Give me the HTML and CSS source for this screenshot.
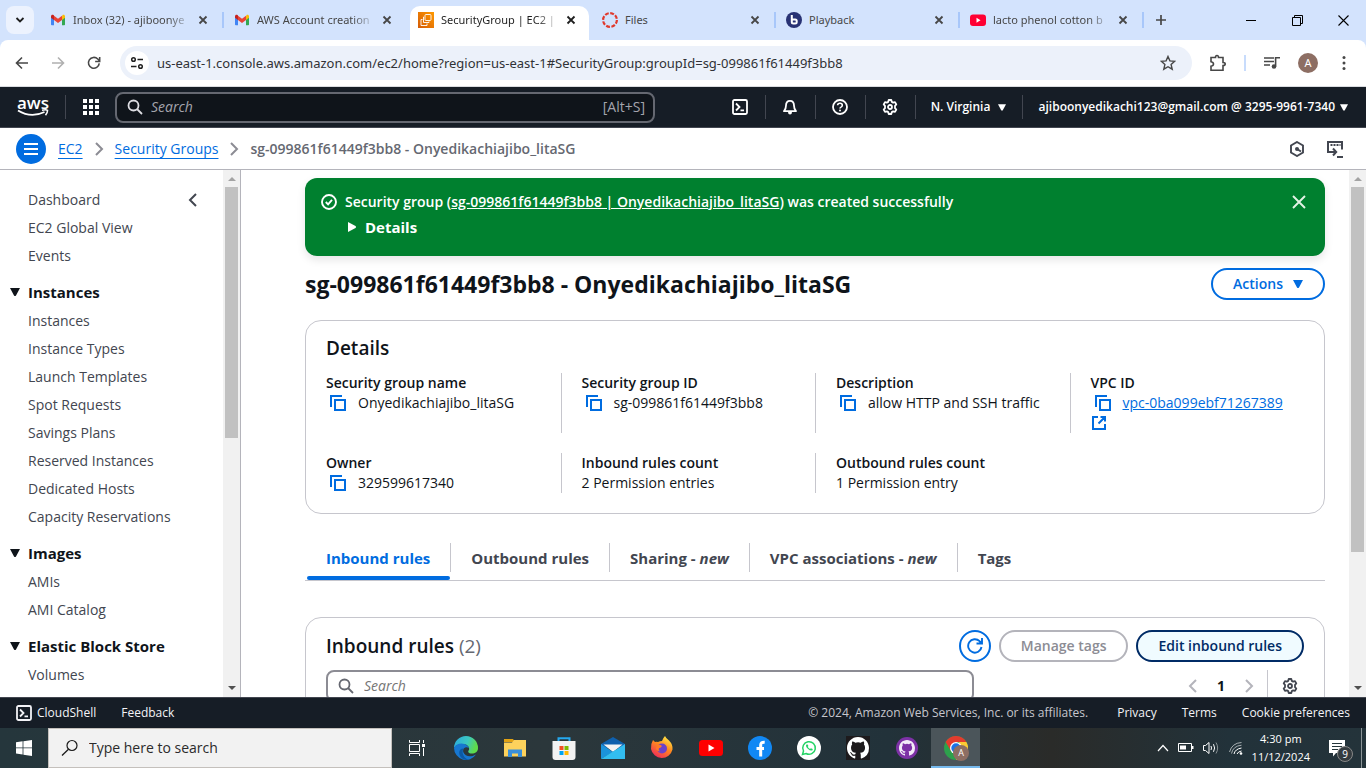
FILE: index.html
```html
<!DOCTYPE html>
<html lang="en">
<head>
<meta charset="utf-8">
<meta name="viewport" content="width=device-width, initial-scale=1">
<title>SecurityGroup | EC2 | us-east-1</title>
<link rel="stylesheet" href="styles.css">
</head>
<body>
<svg class="defs" aria-hidden="true">
  <symbol id="i-close" viewBox="0 0 16 16"><path d="M4.5 4.500l7 7M11.500 4.500l-7 7" fill="none" stroke="currentColor" stroke-width="1.800"/></symbol>
  <symbol id="i-gmail" viewBox="0 0 16 16"><path d="M1 4v8.400c0 .5.4.8.8.8H4V6z" fill="#4285f4"/><path d="M12 6v7.200h2.200c.5 0 .8-.4.8-.8V4z" fill="#34a853"/><path d="M12 4.500V8l3-2.300V4.300c0-1.500-1.500-2-2.500-1.200z" fill="#fbbc04"/><path d="M4 8V3.800l4 3 4-3V8l-4 3z" fill="#ea4335"/><path d="M1 4.300v1.400L4 8V3.600l-.5-.5C2.500 2.300 1 2.800 1 4.300z" fill="#c5221f"/></symbol>
  <symbol id="i-gear" viewBox="0 0 16 16"><path d="M6.700 1h2.600l.5 1.900 1.300.7 1.900-.5 1.300 2.300-1.300 1.400v2.400l1.300 1.400-1.300 2.300-1.900-.5-1.300.7-.5 1.900H6.700l-.5-1.900-1.300-.7-1.900.5-1.300-2.300L3 9.200V6.800L1.700 5.400 3 3.100l1.900.5 1.300-.7z" fill="none" stroke="currentColor" stroke-width="1.800" stroke-linejoin="round"/><circle cx="8" cy="8" r="2" fill="none" stroke="currentColor" stroke-width="1.800"/></symbol>
  <symbol id="i-search" viewBox="0 0 16 16"><circle cx="6.500" cy="6.500" r="5" fill="none" stroke="currentColor" stroke-width="1.800"/><path d="M10 10l5 5" stroke="currentColor" stroke-width="1.800"/></symbol>
  <symbol id="i-shell" viewBox="0 0 16 16"><rect x="1" y="1" width="14" height="14" rx="1.500" fill="none" stroke="currentColor" stroke-width="1.800"/><path d="M4 4.500L7.500 8 4 11.500M8.500 11.300H12" fill="none" stroke="currentColor" stroke-width="1.800"/></symbol>
  <symbol id="i-chev" viewBox="0 0 16 16"><path d="M5 2l6 6-6 6" fill="none" stroke="currentColor" stroke-width="2"/></symbol>
  <symbol id="i-chevl" viewBox="0 0 16 16"><path d="M11 2L5 8l6 6" fill="none" stroke="currentColor" stroke-width="2"/></symbol>
  <symbol id="i-caret" viewBox="0 0 10 8"><path d="M0 0h10L6 7.500Q5 8.500 4 7.500z" fill="currentColor"/></symbol>
  <symbol id="i-copy" viewBox="0 0 16 16"><path d="M1 12V1h11" fill="none" stroke="currentColor" stroke-width="2"/><rect x="5" y="5" width="10" height="10" fill="none" stroke="currentColor" stroke-width="2"/></symbol>
  <symbol id="i-refresh" viewBox="0 0 16 16"><path d="M14.500 9A6.700 6.700 0 1 1 12.600 3.200L15 5.400M15 0v5.500H9.500" fill="none" stroke="currentColor" stroke-width="1.900"/></symbol>
  <symbol id="i-octo" viewBox="0 0 16 16"><path d="M8 0C3.580 0 0 3.580 0 8c0 3.540 2.290 6.530 5.470 7.590.4.070.55-.17.55-.38v-1.490c-2.010.37-2.530-.49-2.690-.94-.09-.23-.48-.94-.82-1.130-.28-.15-.68-.52-.01-.53.63-.01 1.080.58 1.230.82.720 1.210 1.870.87 2.330.66.070-.52.280-.87.510-1.070-1.780-.2-3.640-.89-3.640-3.950 0-.87.310-1.590.82-2.150-.08-.2-.36-1.020.08-2.120 0 0 .67-.21 2.200.82a7.400 7.400 0 0 1 4 0c1.530-1.040 2.200-.82 2.200-.82.440 1.100.160 1.920.080 2.120.510.560.820 1.270.820 2.150 0 3.070-1.870 3.750-3.650 3.950.290.250.540.730.540 1.480v2.190c0 .21.150.46.550.38A8 8 0 0 0 16 8c0-4.420-3.580-8-8-8z" fill="currentColor"/></symbol>
</svg>

<header class="browser">
  <div class="tabstrip">
    <button class="tab-search" aria-label="Search tabs"><svg width="10" height="10" viewBox="0 0 10 10"><path d="M1.500 3L5 6.500 8.500 3" fill="none" stroke="#1f1f1f" stroke-width="1.800"/></svg></button>
    <div class="tab sep"><svg class="fav"><use href="#i-gmail"/></svg><span class="tab-title fade">Inbox (32) - ajiboonye</span><button class="tab-x" aria-label="Close"><svg><use href="#i-close"/></svg></button></div>
    <div class="tab"><svg class="fav"><use href="#i-gmail"/></svg><span class="tab-title fade">AWS Account creation</span><button class="tab-x" aria-label="Close"><svg><use href="#i-close"/></svg></button></div>
    <div class="tab active"><svg class="fav" viewBox="0 0 16 16"><defs><linearGradient id="g-ec2" x1="0" y1="1" x2="1" y2="0"><stop offset="0" stop-color="#d45b07"/><stop offset="1" stop-color="#f90"/></linearGradient></defs><rect width="16" height="16" fill="url(#g-ec2)"/><g fill="none" stroke="#fff" stroke-width=".9"><rect x="7" y="2.500" width="6" height="6" rx="1"/><path d="M6 5H5.500v5.500H11V9.500"/><path d="M4.500 7.500H3v6h6v-2"/></g></svg><span class="tab-title fade">SecurityGroup | EC2 |</span><button class="tab-x" aria-label="Close"><svg><use href="#i-close"/></svg></button></div>
    <div class="tab sep"><svg class="fav" viewBox="0 0 16 16"><circle cx="8" cy="8" r="6.900" fill="none" stroke="#e0392c" stroke-width="2.200" stroke-dasharray="3.900 1.520"/></svg><span class="tab-title">Files</span><button class="tab-x" aria-label="Close"><svg><use href="#i-close"/></svg></button></div>
    <div class="tab sep"><svg class="fav" viewBox="0 0 16 16"><circle cx="8" cy="8" r="8" fill="#283274"/><path d="M5.800 3v7M5.800 7.500h3.400q1.500 0 1.500 1.500v1q0 1.500-1.500 1.500H7.300q-1.500 0-1.500-1.500z" fill="none" stroke="#fff" stroke-width="2"/></svg><span class="tab-title">Playback</span><button class="tab-x" aria-label="Close"><svg><use href="#i-close"/></svg></button></div>
    <div class="tab sep"><svg class="fav" viewBox="0 0 16 16"><rect y="2.500" width="16" height="11.500" rx="3" fill="#f03"/><path d="M6.500 5.800v4.900L10.500 8.200z" fill="#fff"/></svg><span class="tab-title fade">lacto phenol cotton b</span><button class="tab-x" aria-label="Close"><svg><use href="#i-close"/></svg></button></div>
    <button class="new-tab" aria-label="New tab"><svg width="12" height="12" viewBox="0 0 12 12"><path d="M6 1v10M1 6h10" stroke="#474747" stroke-width="1.700"/></svg></button>
    <div class="win-controls">
      <button aria-label="Minimize"><svg width="11" height="11" viewBox="0 0 11 11"><path d="M0 5.500h10" stroke="#000"/></svg></button>
      <button aria-label="Restore"><svg width="11" height="11" viewBox="0 0 11 11"><path d="M.5 2.500h8v8h-8zM2.500 2.500v-2h8v8h-2" fill="none" stroke="#000"/></svg></button>
      <button aria-label="Close window"><svg width="11" height="11" viewBox="0 0 11 11"><path d="M.5.5l10 10M10.500.5l-10 10" stroke="#000" stroke-width="1.100"/></svg></button>
    </div>
  </div>
  <div class="toolbar">
    <button class="tool" aria-label="Back"><svg width="14" height="14" viewBox="0 0 14 14"><path d="M13 7H2M7 1.500L1.500 7 7 12.500" fill="none" stroke="#474747" stroke-width="1.600"/></svg></button>
    <button class="tool" aria-label="Forward"><svg width="14" height="14" viewBox="0 0 14 14"><path d="M1 7h11M7 1.500L12.500 7 7 12.500" fill="none" stroke="#b0b0b0" stroke-width="1.600"/></svg></button>
    <button class="tool" aria-label="Reload"><svg width="14" height="14" viewBox="0 0 16 16"><path d="M14 8.500A6.200 6.200 0 1 1 12.300 3.500L14.500 5.700M14.500 1v5.200H9.300" fill="none" stroke="#474747" stroke-width="1.800"/></svg></button>
    <div class="omnibox">
      <button class="site-info" aria-label="Site information"><svg width="14" height="14" viewBox="0 0 14 14" fill="none" stroke="#1f1f1f" stroke-width="1.500"><circle cx="3.500" cy="3.500" r="1.800"/><path d="M7.500 3.500H13M1 10.500h5.500"/><circle cx="10.500" cy="10.500" r="1.800"/></svg></button>
      <input class="url" aria-label="Address" value="us-east-1.console.aws.amazon.com/ec2/home?region=us-east-1#SecurityGroup:groupId=sg-099861f61449f3bb8">
      <button class="bare" aria-label="Bookmark"><svg width="16" height="16" viewBox="0 0 16 16"><path d="M8 1.500l1.900 4.400 4.800.4-3.600 3.200 1.100 4.700L8 11.700l-4.200 2.500 1.100-4.700L1.300 6.300l4.800-.4z" fill="none" stroke="#474747" stroke-width="1.400"/></svg></button>
    </div>
    <button class="tool ext" aria-label="Extensions"><svg width="18" height="18" viewBox="0 0 18 18"><path d="M2 3.500h4.500Q6.500 1.500 8 1.500t1.500 2H14v5q2.200 0 2.200 1.500T14 11.500v4.700H2v-4q2.500-.6 2.500-2.300T2 7.700z" fill="none" stroke="#474747" stroke-width="1.600"/></svg></button>
    <span class="tool-sep"></span>
    <button class="tool" aria-label="Media"><svg width="16" height="14" viewBox="0 0 16 14"><path d="M0 2h10M0 5.500h10M0 9h6" stroke="#474747" stroke-width="1.600"/><circle cx="10" cy="10.500" r="2.300" fill="#474747"/><path d="M11.600 10.500V1.800H16" fill="none" stroke="#474747" stroke-width="1.600"/></svg></button>
    <button class="tool" aria-label="Profile"><span class="avatar">A</span></button>
    <button class="tool" aria-label="Menu"><svg width="4" height="16" viewBox="0 0 4 16" fill="#474747"><circle cx="2" cy="2.500" r="1.500"/><circle cx="2" cy="8" r="1.500"/><circle cx="2" cy="13.500" r="1.500"/></svg></button>
  </div>
</header>

<nav class="awsbar" aria-label="AWS">
  <a class="logo" href="#" aria-label="AWS home"><span>aws</span><svg width="32" height="8" viewBox="0 0 32 8"><path d="M1 1.500Q14 9.500 27.500 3" fill="none" stroke="#fff" stroke-width="1.800"/><path d="M25 1.300q4-1 5.500 0 .3 2-2 5" fill="none" stroke="#fff" stroke-width="1.500"/></svg></a>
  <button class="apps" aria-label="Services"><svg width="16" height="16" viewBox="0 0 16 16" fill="#fff"><path d="M0 0h4v4H0zM6 0h4v4H6zM12 0h4v4h-4zM0 6h4v4H0zM6 6h4v4H6zM12 6h4v4h-4zM0 12h4v4H0zM6 12h4v4H6zM12 12h4v4h-4z"/></svg></button>
  <label class="aws-search"><svg class="ic"><use href="#i-search"/></svg><input type="search" placeholder="Search" aria-label="Search"><span>[Alt+S]</span></label>
  <div class="aws-tools">
    <button aria-label="CloudShell"><svg class="ic"><use href="#i-shell"/></svg></button>
    <button aria-label="Notifications"><svg class="ic" viewBox="0 0 16 16"><path d="M2 12.200Q4 10 4 6.500 4 1.800 8 1.800t4 4.700q0 3.500 2 5.700z" fill="none" stroke="currentColor" stroke-width="1.800" stroke-linejoin="round"/><path d="M6 13q0 2.500 2 2.500t2-2.500z" fill="currentColor"/></svg></button>
    <button aria-label="Help"><svg class="ic" viewBox="0 0 16 16"><circle cx="8" cy="8" r="7" fill="none" stroke="currentColor" stroke-width="1.800"/><path d="M5.600 6.300Q5.700 4.200 8 4.200t2.300 2q0 1.200-1.300 1.900-1 .5-1 1.500" fill="none" stroke="currentColor" stroke-width="1.600"/><circle cx="8" cy="11.600" r="1" fill="currentColor"/></svg></button>
    <button aria-label="Settings"><svg class="ic"><use href="#i-gear"/></svg></button>
    <button class="region">N. Virginia <svg class="caret-s"><use href="#i-caret"/></svg></button>
    <button class="account">ajiboonyedikachi123@gmail.com @ 3295-9961-7340 <svg class="caret-s"><use href="#i-caret"/></svg></button>
  </div>
</nav>

<div class="crumbs">
  <button class="burger" aria-label="Toggle navigation"><svg width="16" height="14" viewBox="0 0 16 14"><path d="M1 2h14M1 7h14M1 12h14" stroke="#fff" stroke-width="2"/></svg></button>
  <nav class="crumb-list" aria-label="Breadcrumbs"><a href="#">EC2</a><svg class="ic"><use href="#i-chev"/></svg><a href="#">Security Groups</a><svg class="ic"><use href="#i-chev"/></svg><span>sg-099861f61449f3bb8 - Onyedikachiajibo_litaSG</span></nav>
  <button class="bare crumb-tool" aria-label="Info"><svg class="ic" viewBox="0 0 16 16"><path d="M8 1l6 3.500v7L8 15l-6-3.500v-7z" fill="none" stroke="currentColor" stroke-width="1.900"/><circle cx="8" cy="8" r="2" fill="currentColor"/><path d="M8 8l4 2.500" stroke="currentColor" stroke-width="2"/></svg></button>
  <button class="bare crumb-tool" aria-label="Tutorials"><svg width="18" height="18" viewBox="0 0 18 18" fill="none" stroke="currentColor" stroke-width="2"><path d="M6 12H2V2h14v7.500M3 12h6M7 8.500l3.200 3.500L7 15.500M11 17h6"/><path d="M4.500 5h10" stroke-dasharray="2 1"/></svg></button>
</div>

<div class="workspace">
  <aside class="side">
    <nav class="side-nav" aria-label="EC2">
      <div class="row-first"><a href="#">Dashboard</a><button class="bare" aria-label="Collapse"><svg class="ic"><use href="#i-chevl"/></svg></button></div>
      <a href="#">EC2 Global View</a>
      <a href="#">Events</a>
      <h2><svg class="caret"><use href="#i-caret"/></svg>Instances</h2>
      <a href="#">Instances</a>
      <a href="#">Instance Types</a>
      <a href="#">Launch Templates</a>
      <a href="#">Spot Requests</a>
      <a href="#">Savings Plans</a>
      <a href="#">Reserved Instances</a>
      <a href="#">Dedicated Hosts</a>
      <a href="#">Capacity Reservations</a>
      <h2><svg class="caret"><use href="#i-caret"/></svg>Images</h2>
      <a href="#">AMIs</a>
      <a href="#">AMI Catalog</a>
      <h2><svg class="caret"><use href="#i-caret"/></svg>Elastic Block Store</h2>
      <a href="#">Volumes</a>
    </nav>
    <div class="scroll"><span class="up"></span><span class="track"><span class="thumb thumb-side"></span></span><span class="down"></span></div>
  </aside>

  <main class="content">
    <section class="flash">
      <svg class="ic" viewBox="0 0 16 16"><circle cx="8" cy="8" r="7" fill="none" stroke="#fff" stroke-width="1.900"/><path d="M4.800 8l2.300 2.300L11 5.800" fill="none" stroke="#fff" stroke-width="1.900"/></svg>
      <div class="flash-text">
        <p>Security group (<a href="#">sg-099861f61449f3bb8 | Onyedikachiajibo_litaSG</a>) was created successfully</p>
        <button class="flash-more"><svg width="8" height="10" viewBox="0 0 8 10"><path d="M0 0l7.500 4q1 1 0 2L0 10z" fill="#fff"/></svg>Details</button>
      </div>
      <button class="bare" aria-label="Dismiss"><svg class="ic" viewBox="0 0 16 16"><path d="M2 2l12 12M14 2L2 14" stroke="#e3f3e6" stroke-width="1.900"/></svg></button>
    </section>

    <div class="title-row">
      <h1>sg-099861f61449f3bb8 - Onyedikachiajibo_litaSG</h1>
      <button class="btn">Actions <svg class="caret"><use href="#i-caret"/></svg></button>
    </div>

    <section class="card details">
      <h2>Details</h2>
      <dl class="grid">
        <div><dt>Security group name</dt><dd><svg class="ic copy"><use href="#i-copy"/></svg>Onyedikachiajibo_litaSG</dd></div>
        <div><dt>Security group ID</dt><dd><svg class="ic copy"><use href="#i-copy"/></svg>sg-099861f61449f3bb8</dd></div>
        <div><dt>Description</dt><dd><svg class="ic copy"><use href="#i-copy"/></svg>allow HTTP and SSH traffic</dd></div>
        <div><dt>VPC ID</dt><dd><svg class="ic copy"><use href="#i-copy"/></svg><a href="#">vpc-0ba099ebf71267389</a></dd><dd class="ext-link"><svg width="16" height="16" viewBox="0 0 16 16" fill="none" stroke="currentColor" stroke-width="2"><path d="M7 2H2v12h12V9M9.500 2H14v4.500M14 2L7.500 8.500"/></svg></dd></div>
        <div><dt>Owner</dt><dd><svg class="ic copy"><use href="#i-copy"/></svg>329599617340</dd></div>
        <div><dt>Inbound rules count</dt><dd>2 Permission entries</dd></div>
        <div><dt>Outbound rules count</dt><dd>1 Permission entry</dd></div>
      </dl>
    </section>

    <div class="tabs" role="tablist">
      <button role="tab" aria-selected="true">Inbound rules</button>
      <button role="tab">Outbound rules</button>
      <button role="tab">Sharing - <em>new</em></button>
      <button role="tab">VPC associations - <em>new</em></button>
      <button role="tab">Tags</button>
    </div>

    <section class="card rules">
      <div class="rules-head">
        <h2>Inbound rules <span>(2)</span></h2>
        <button class="btn round" aria-label="Refresh"><svg class="ic"><use href="#i-refresh"/></svg></button>
        <button class="btn" disabled>Manage tags</button>
        <button class="btn hover">Edit inbound rules</button>
      </div>
      <div class="rules-tools">
        <label class="filter"><svg class="ic"><use href="#i-search"/></svg><input type="search" placeholder="Search" aria-label="Find rules"></label>
        <div class="pager"><button class="bare" aria-label="Previous"><svg class="ic"><use href="#i-chevl"/></svg></button><b>1</b><button class="bare" aria-label="Next"><svg class="ic"><use href="#i-chev"/></svg></button></div>
        <button class="bare prefs" aria-label="Preferences"><svg class="ic"><use href="#i-gear"/></svg></button>
      </div>
    </section>
  </main>
  <div class="scroll"><span class="up"></span><span class="track"><span class="thumb thumb-main"></span></span><span class="down"></span></div>
</div>

<footer class="foot">
  <a href="#" class="shell"><svg class="ic"><use href="#i-shell"/></svg>CloudShell</a>
  <a href="#">Feedback</a>
  <span class="copyright">© 2024, Amazon Web Services, Inc. or its affiliates.</span>
  <a href="#">Privacy</a>
  <a href="#">Terms</a>
  <a href="#">Cookie preferences</a>
</footer>

<div class="taskbar">
  <button class="start" aria-label="Start"><svg width="16" height="16" viewBox="0 0 16 16" fill="#fff"><path d="M0 2.200l6.600-.9v6.200H0zM7.400 1.200L16 0v7.500H7.400zM0 8.300h6.600v6.200L0 13.600zM7.400 8.300H16V16l-8.600-1.200z"/></svg></button>
  <label class="os-search"><svg width="18" height="18" viewBox="0 0 18 18"><circle cx="11" cy="6.500" r="5" fill="none" stroke="#1a1a1a" stroke-width="1.200"/><path d="M7.500 10.200L1 16.500" stroke="#1a1a1a" stroke-width="1.300"/></svg><input placeholder="Type here to search" aria-label="Type here to search"></label>
  <button class="app" aria-label="Task view"><svg width="16" height="16" viewBox="0 0 16 16" fill="none" stroke="#fff"><path d="M.5 0v2.500h10V0M.5 16v-2.500h10V16M.5 4.500h10v7H.5zM14.500 0v3M14.500 8v8"/><path d="M13 4h3v3h-3z" fill="#fff" stroke="none"/></svg></button>
  <button class="app" aria-label="Edge"><svg width="24" height="24" viewBox="0 0 24 24"><defs><linearGradient id="g-e1" x1="0" y1="0" x2="1" y2=".3"><stop offset="0" stop-color="#2aa8e0"/><stop offset=".6" stop-color="#3cc8c0"/><stop offset="1" stop-color="#5fdc4a"/></linearGradient></defs><path d="M0 12a12 12 0 0 1 24 0c0 4-3 5.500-6 5.500-4 0-4.500-2-3-3.500C16 11 13 8 9 8c-5 0-8 2-9 4z" fill="url(#g-e1)"/><path d="M0 12c1-3 4-4.500 7.500-4.500C12 7.500 15 11 15 12c-4-2-7 1-5.500 4.500C11 20 16 22 22 18.500A12 12 0 0 1 0 12z" fill="#1777d0"/><path d="M9.500 12.500C7 17 10 22 14.500 23.700 8 25 4 19 5.500 15c.7-2 2.500-2.700 4-2.500z" fill="#0c59a4"/></svg></button>
  <button class="app" aria-label="File Explorer"><svg width="24" height="24" viewBox="0 0 24 24"><path d="M1 3h9l2 3H1z" fill="#e2a213"/><path d="M1 6.500h8L11 4h12v16.500H1z" fill="#fdd25c"/><path d="M5 21v-7.500h14V21h-4v-3.500H9V21z" fill="#3b8fd8"/></svg></button>
  <button class="app" aria-label="Store"><svg width="24" height="24" viewBox="0 0 24 24"><path d="M6.500 7V2.200h11V7" fill="none" stroke="#25a8ee" stroke-width="2"/><path d="M.5 5h23v16q0 3-3 3h-17q-3 0-3-3z" fill="#f2f2f2"/><path d="M7.500 10h4v4h-4z" fill="#f25022"/><path d="M12.500 10h4v4h-4z" fill="#7fba00"/><path d="M7.500 15h4v4h-4z" fill="#00a4ef"/><path d="M12.500 15h4v4h-4z" fill="#ffb900"/></svg></button>
  <button class="app" aria-label="Mail"><svg width="24" height="24" viewBox="0 0 24 24"><path d="M0 8l12-7 12 7v4H0z" fill="#0f60ad"/><path d="M2.500 8.500h19L12 16z" fill="#f4f4f4"/><path d="M0 8l12 8-12 7z" fill="#1b93dc"/><path d="M24 8v15H0z" fill="#32bdf0"/></svg></button>
  <button class="app" aria-label="Firefox"><svg width="24" height="24" viewBox="0 0 24 24"><defs><linearGradient id="g-ff" x1=".8" y1="0" x2=".2" y2="1"><stop offset="0" stop-color="#fff04a"/><stop offset=".45" stop-color="#ff8a1e"/><stop offset="1" stop-color="#f0245e"/></linearGradient></defs><path d="M3 4q1 1 2 2 1.500-.5 3 0 2-1 4-1 1-3 3-5 1 2.500 4 4.500 4 4 3.500 9A11 11 0 0 1 1 13Q.5 8 3 4z" fill="url(#g-ff)"/><circle cx="12" cy="12.500" r="5" fill="#6b42c9"/><path d="M7 9q3-1 5 1-1 2-3 2.200-1 2.300 1.500 3-4 .5-4.500-3z" fill="#ff7a27"/></svg></button>
  <button class="app" aria-label="YouTube"><svg width="24" height="24" viewBox="0 0 24 24"><rect y="4" width="24" height="16" rx="3.500" fill="#f00"/><path d="M9.500 8.500v7l6-3.500z" fill="#fff"/></svg></button>
  <button class="app" aria-label="Facebook"><svg width="24" height="24" viewBox="0 0 24 24"><circle cx="12" cy="12" r="12" fill="#1188f4"/><path d="M12.700 20.500V9q0-3 4-2.800M8.500 12.500h7.500" fill="none" stroke="#fff" stroke-width="3"/></svg></button>
  <button class="app" aria-label="WhatsApp"><svg width="24" height="24" viewBox="0 0 24 24"><circle cx="12" cy="12" r="12" fill="#fff"/><path d="M5.500 18.500l1-3.500a6.300 6.300 0 1 1 2.500 2.500z" fill="none" stroke="#25d366" stroke-width="1.500"/><path d="M9.500 8.500q-1.500 1.500 1.300 4.200t4.700 1.600l.2-1.200-1.800-.9-.9.800q-1.600-.7-2.200-2.300l.6-.7-.7-1.600z" fill="#25d366"/></svg></button>
  <button class="app" aria-label="GitHub"><svg width="24" height="24" viewBox="0 0 24 24"><rect width="24" height="24" fill="#1d1a1c"/><g color="#fff"><use href="#i-octo" x="1" y="1" width="22" height="22"/></g></svg></button>
  <button class="app" aria-label="GitHub Desktop"><svg width="24" height="24" viewBox="0 0 24 24"><circle cx="12" cy="12" r="11" fill="#7d31a6"/><g color="#f3ecf8"><use href="#i-octo" x="4" y="4" width="16" height="16"/></g></svg></button>
  <button class="app current" aria-label="Chrome"><svg width="24" height="24" viewBox="0 0 24 24"><circle cx="12" cy="12" r="12" fill="#2da14c"/><path d="M1.600 6A12 12 0 0 1 22.400 6H12L7 15z" fill="#e33b2e"/><path d="M22.400 6A12 12 0 0 1 12 24l5-9-2-9z" fill="#fcc934"/><circle cx="12" cy="12" r="6" fill="#fff"/><circle cx="12" cy="12" r="4.700" fill="#1a73e8"/></svg><span class="mini">A</span></button>
  <div class="tray">
    <svg width="12" height="8" viewBox="0 0 12 8"><path d="M1 7l5-5.500L11 7" fill="none" stroke="#fff" stroke-width="1.200"/></svg>
    <svg width="16" height="10" viewBox="0 0 16 10"><path d="M.5.500h13v8H.5z" fill="none" stroke="#fff"/><path d="M2 2.500h6v4H2zM14 3h1.500v3H14z" fill="#fff"/></svg>
    <svg width="17" height="14" viewBox="0 0 17 14" fill="none" stroke="#fff"><path d="M.5 4.500h2L6 1.500v11L2.500 9.500h-2zM8 5q1 2 0 4M10.500 3.200q2.200 3.800 0 7.600"/><path d="M13 1.500q3.300 5.500 0 11" stroke="#8a9295"/></svg>
    <svg width="14" height="14" viewBox="0 0 14 14" fill="none" stroke="#fff"><path d="M5 13q1-5 7.500-6M8 13q1-2.500 4.500-3"/><path d="M.5 11Q3 2 12.500 1.500M2.500 12.500Q4 5 12.500 4.200" stroke="#a8afb2"/><circle cx="12" cy="12.500" r="1.300" fill="#fff" stroke="none"/></svg>
    <div class="clock"><time>4:30 pm</time><span>11/12/2024</span></div>
    <div class="notif"><svg width="16" height="17" viewBox="0 0 16 17"><path d="M0 0h16v13H7l-3 3.500V13H0z" fill="#fff"/><path d="M3 3.500h10M3 6.500h10M3 9.500h6" stroke="#26363b"/></svg><span class="badge">9</span></div>
  </div>
  <button class="peek" aria-label="Show desktop"></button>
</div>
</body>
</html>
```
FILE: styles.css
```css
* { box-sizing: border-box; }
body {
  margin: 0;
  height: 100vh;
  display: flex;
  flex-direction: column;
  overflow: hidden;
  background: #fff;
  color: #0f141a;
  font: 14px/20px "Open Sans", "Noto Sans", sans-serif;
}
button, input { font: inherit; color: inherit; margin: 0; }
button { background: none; border: 0; padding: 0; display: flex; align-items: center; justify-content: center; }
input { border: 0; background: none; padding: 0; min-width: 0; outline: 0; appearance: none; }
a { color: #006ce0; }
h1, h2, p, dl, dd { margin: 0; }
svg { display: block; flex: none; }
.defs { position: absolute; width: 0; height: 0; }
.ic { width: 16px; height: 16px; }
.caret { width: 10px; height: 8px; }
.caret-s { width: 8px; height: 7px; }

/* Browser chrome */
.browser { flex: none; font-family: "Noto Sans", "Open Sans", sans-serif; font-size: 11px; color: #1f1f1f; background: #d3e3fd; }
.tabstrip { height: 40px; display: flex; align-items: center; }
.tab-search { width: 28px; height: 28px; margin: 0 6px; border-radius: 8px; background: #ecf2fe; }
.tab { position: relative; flex: 0 1 184px; height: 34px; margin-top: 6px; padding: 0 13px 6px 10px; display: flex; align-items: center; min-width: 0; color: #474747; }
.tab.sep::after { content: ""; position: absolute; right: 0; top: 6px; width: 2px; height: 16px; background: #a8c7fa; }
.tab.active { color: #1f1f1f; }
.tab.active::before { content: ""; position: absolute; z-index: 0; inset: 0 3px 0 2px; background: #fff; border-radius: 10px 10px 0 0; }
.tab.active > * { position: relative; }
.fav { width: 16px; height: 16px; margin-right: 7px; }
.tab-title { flex: 1; overflow: hidden; white-space: nowrap; }
.tab-title.fade { -webkit-mask-image: linear-gradient(90deg, #000 80%, transparent); mask-image: linear-gradient(90deg, #000 80%, transparent); }
.tab-x { margin-left: 3px; }
.tab-x svg { width: 16px; height: 16px; }
.new-tab { width: 28px; height: 28px; margin-left: 3px; }
.win-controls { margin-left: auto; display: flex; }
.win-controls button { width: 46px; height: 40px; }
.toolbar { height: 47px; display: flex; align-items: center; padding: 0 4px; background: #fff; border-radius: 8px 8px 0 0; border-bottom: 1px solid #dadce0; }
.tool { width: 36px; height: 34px; }
.omnibox { flex: 1; height: 34px; margin: 0 8px; padding: 0 16px 0 5px; display: flex; align-items: center; gap: 8px; border-radius: 17px; background: #ecf1fa; }
.site-info { width: 24px; height: 24px; border-radius: 50%; background: #fff; }
.url { flex: 1; font-size: 13px; color: #303236; }
.tool-sep { width: 2px; height: 16px; margin: 0 8px; background: #c8dcfc; }
.avatar { width: 20px; height: 20px; border-radius: 50%; background: #8d6e63; color: #fff; }

/* AWS global navigation */
.awsbar { flex: none; height: 41px; display: flex; align-items: center; background: #161d26; border-bottom: 1px solid #424650; color: #fff; }
.logo { width: 66px; height: 24px; padding-left: 17px; border-right: 1px solid #424650; color: #fff; text-decoration: none; display: flex; flex-direction: column; justify-content: center; }
.logo span { font-size: 17px; font-weight: 600; line-height: 12px; }
.apps { width: 49px; }
.aws-search { flex: 0 1 540px; height: 31px; display: flex; align-items: center; gap: 8px; padding: 0 8px 0 10px; border: 2px solid #656871; border-radius: 8px; background: #0f141a; color: #dedee3; }
.aws-search input { flex: 1; }
.aws-search span, .aws-search input::placeholder { color: #a4a4ad; }
.aws-search input::placeholder, .filter input::placeholder { font-style: italic; opacity: 1; }
.aws-tools { margin-left: auto; display: flex; align-items: center; }
.aws-tools button { width: 50px; height: 24px; border-right: 1px solid #424650; font-size: 12px; font-weight: 600; gap: 8px; white-space: nowrap; }
.aws-tools .region { width: 107px; }
.aws-tools .account { width: auto; border: 0; padding: 0 18px 0 16px; gap: 5px; }

/* Breadcrumb bar */
.crumbs { flex: none; height: 42px; display: flex; align-items: center; padding: 0 22px 0 16px; border-bottom: 1px solid #b4b4bb; }
.burger { width: 30px; height: 30px; border-radius: 50%; background: #006ce0; }
.crumb-list { flex: 1; display: flex; align-items: center; gap: 8px; margin-left: 12px; color: #8c8c94; }
.crumb-list a { text-underline-offset: 4px; }
.crumb-list span { color: #656871; font-weight: 600; }
.crumb-tool { margin-left: 21px; color: #424650; }

/* Workspace */
.workspace { flex: 1; min-height: 0; display: flex; }
.side { flex: none; width: 241px; display: flex; overflow: hidden; border-right: 1px solid #b4b4bb; }
.side-nav { flex: 1; padding: 16px 22px 0 28px; }
.side-nav a { display: block; padding: 4px 0; color: #424650; text-decoration: none; white-space: nowrap; }
.side-nav h2 { position: relative; padding: 12px 0 4px; font-size: 15px; line-height: 21px; font-weight: 700; white-space: nowrap; }
.side-nav h2 .caret { position: absolute; left: -18px; top: 18px; }
.row-first { display: flex; justify-content: space-between; align-items: center; color: #424650; }
.scroll { flex: none; width: 17px; display: flex; flex-direction: column; align-items: center; background: #f1f1f1; }
.scroll .up, .scroll .down { width: 0; border: 4px solid transparent; flex: none; }
.scroll .up { border-bottom-color: #a3a3a3; border-top: 0; margin: 7px 0 6px; }
.scroll .down { border-top-color: #505050; border-bottom: 0; margin: 6px 0 7px; }
.track { flex: 1; width: 13px; }
.thumb { display: block; background: #c1c1c1; }
.thumb-side { height: 51%; }
.thumb-main { height: 74%; }

.content { flex: 1; min-width: 0; overflow: hidden; padding: 8px 24px 0 64px; }
.flash { display: flex; align-items: flex-start; gap: 8px; height: 78px; padding: 16px 18px 0 16px; border-radius: 12px; background: #00802f; color: #fff; box-shadow: 0 4px 8px rgba(0, 7, 22, .1); }
.flash-text { flex: 1; }
.flash p { line-height: 16px; font-weight: 600; }
.flash a { color: #fff; }
.flash-more { gap: 9px; margin-top: 7px; padding-left: 3px; font-size: 15px; font-weight: 700; }
.title-row { display: flex; align-items: center; justify-content: space-between; margin: 12px 0 20px; }
h1 { font-size: 23px; line-height: 32px; font-weight: 700; }
.btn { height: 32px; padding: 0 20px; border: 2px solid #006ce0; border-radius: 16px; color: #006ce0; font-weight: 600; gap: 10px; white-space: nowrap; }
.btn.round { width: 32px; padding: 0; }
.btn:disabled { border-color: #b4b4bb; color: #8c8c94; }
.btn.hover { border-color: #002b66; color: #002b66; background: #f0fbff; }
.card { border: 1px solid #c6c6cd; border-radius: 16px; padding: 0 20px; }
.card h2 { font-size: 19px; line-height: 24px; font-weight: 600; }
.details { padding: 15px 20px 20px; }
.grid { display: grid; grid-template-columns: repeat(4, minmax(0, 1fr)); row-gap: 20px; margin: 13px -20px 0; }
.grid > div { padding-left: 20px; border-left: 1px solid #c6c6cd; white-space: nowrap; }
.grid > div:nth-child(4n+1) { border-color: transparent; padding-left: 19px; }
dt { font-weight: 600; }
dd { display: flex; align-items: center; min-height: 20px; }
.copy { margin: 0 12px 0 4px; color: #006ce0; }
.ext-link { color: #006ce0; }
.tabs { display: flex; align-items: flex-start; margin-top: 24px; padding-top: 5px; height: 43px; border-bottom: 1px solid #c6c6cd; }
.tabs button { height: 29px; padding: 0 20px; border-left: 1px solid #c6c6cd; font-size: 15px; font-weight: 700; color: #424650; white-space: pre; position: relative; }
.tabs button:first-child { border-color: transparent; color: #006ce0; }
.tabs button:first-child::after { content: ""; position: absolute; left: 1px; right: 0; bottom: -8px; height: 4px; border-radius: 2px; background: #006ce0; }
.rules { margin-top: 36px; padding: 12px 20px 20px; }
.rules-head { display: flex; align-items: center; gap: 8px; }
.rules-head h2 { flex: 1; }
.rules-head h2 span { font-weight: 400; color: #656871; }
.rules-tools { display: flex; align-items: center; margin-top: 8px; }
.filter { flex: 0 1 648px; height: 32px; display: flex; align-items: center; gap: 10px; padding: 0 10px; border: 2px solid #8c8c94; border-radius: 8px; color: #656871; }
.pager { margin-left: auto; display: flex; gap: 12px; align-items: center; color: #b4b4bb; padding-right: 10px; }
.pager b { width: 8px; color: #0f141a; text-align: center; margin: 0 4px; }
.prefs { height: 32px; padding: 0 6px 0 14px; border-left: 1px solid #c6c6cd; color: #424650; }

/* Console footer */
.foot { flex: none; height: 31px; display: flex; align-items: center; gap: 25px; padding: 0 16px; background: #161d26; border-top: 1px solid #424650; font-size: 12px; color: #c6c6cd; white-space: nowrap; }
.foot a { color: #f3f3f7; text-decoration: none; font-weight: 500; }
.foot .shell { display: flex; align-items: center; gap: 5px; }
.copyright { margin-left: auto; padding-right: 4px; }

/* Desktop taskbar */
.taskbar { flex: none; height: 40px; display: flex; background: linear-gradient(90deg, #25363c, #2b373b 40%, #22323a 65%, #2a2b29 77%, #22323a 90%, #24333a); color: #fff; }
.start { width: 48px; }
.os-search { width: 344px; display: flex; align-items: center; gap: 10px; padding: 0 12px; background: #f2f2f2; border: 1px solid #c4c0bc; color: #2b2b2b; }
.os-search input { flex: 1; }
.os-search input::placeholder { color: #2b2b2b; opacity: 1; }
.app { width: 49px; position: relative; }
.app.current { background: #4b555a; box-shadow: inset 0 -2px #76b9ed; }
.mini { position: absolute; left: 22px; top: 17px; width: 16px; height: 16px; border-radius: 50%; background: #8d6e63; font-size: 9px; line-height: 16px; text-align: center; }
.tray { margin-left: auto; display: flex; align-items: center; gap: 9px; padding-right: 16px; }
.clock { display: flex; flex-direction: column; align-items: center; font-size: 11px; line-height: 18px; }
.notif { position: relative; margin-left: 10px; }
.badge { position: absolute; left: 8px; top: 6px; width: 16px; height: 16px; border-radius: 50%; border: 1px solid #888; background: #343b3f; font-size: 10px; line-height: 14px; text-align: center; }
.peek { width: 5px; border-left: 1px solid #8b9497; }
```
